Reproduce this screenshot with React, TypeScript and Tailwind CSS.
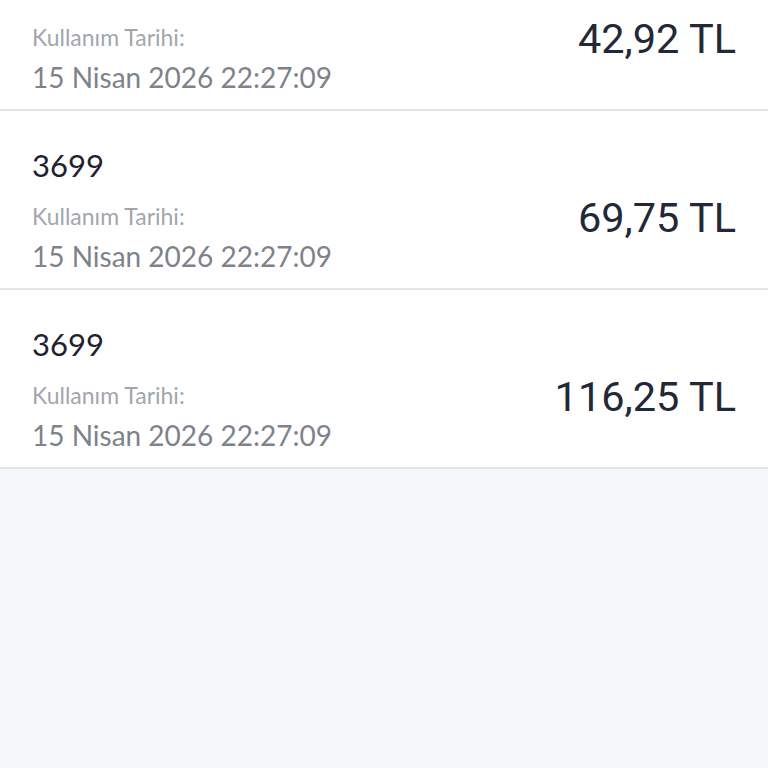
const items = [
  { code: '3699', date: '15 Nisan 2026 22:27:09', amount: '42,92 TL' },
  { code: '3699', date: '15 Nisan 2026 22:27:09', amount: '69,75 TL' },
  { code: '3699', date: '15 Nisan 2026 22:27:09', amount: '116,25 TL' },
];

export default function App() {
  return (
    <div className="min-h-[768px] h-[768px] overflow-hidden bg-[#f5f6f8] font-['Lato',sans-serif]">
      {/* list is scrolled: first row is partly above the fold */}
      <div className="-mt-[68px]">
        {items.map((item, i) => (
          <div key={i} className="bg-white border-b-2 border-[#e4e5e8] pl-8 pr-8 pt-[34px] pb-[12px] flex justify-between">
            <div className="flex flex-col">
              <div className="text-[31px] leading-[40px] text-[#1f2233]">{item.code}</div>
              <div className="mt-[11px] text-[23px] leading-[40px] text-[#a3a6ad]">Kullanım Tarihi:</div>
              <div className="text-[28px] leading-[40px] text-[#7e828b]">{item.date}</div>
            </div>
            <div className="pt-[49px] font-['Roboto',sans-serif] text-[41.5px] leading-[48px] text-[#232838]">
              {item.amount}
            </div>
          </div>
        ))}
      </div>
    </div>
  );
}
